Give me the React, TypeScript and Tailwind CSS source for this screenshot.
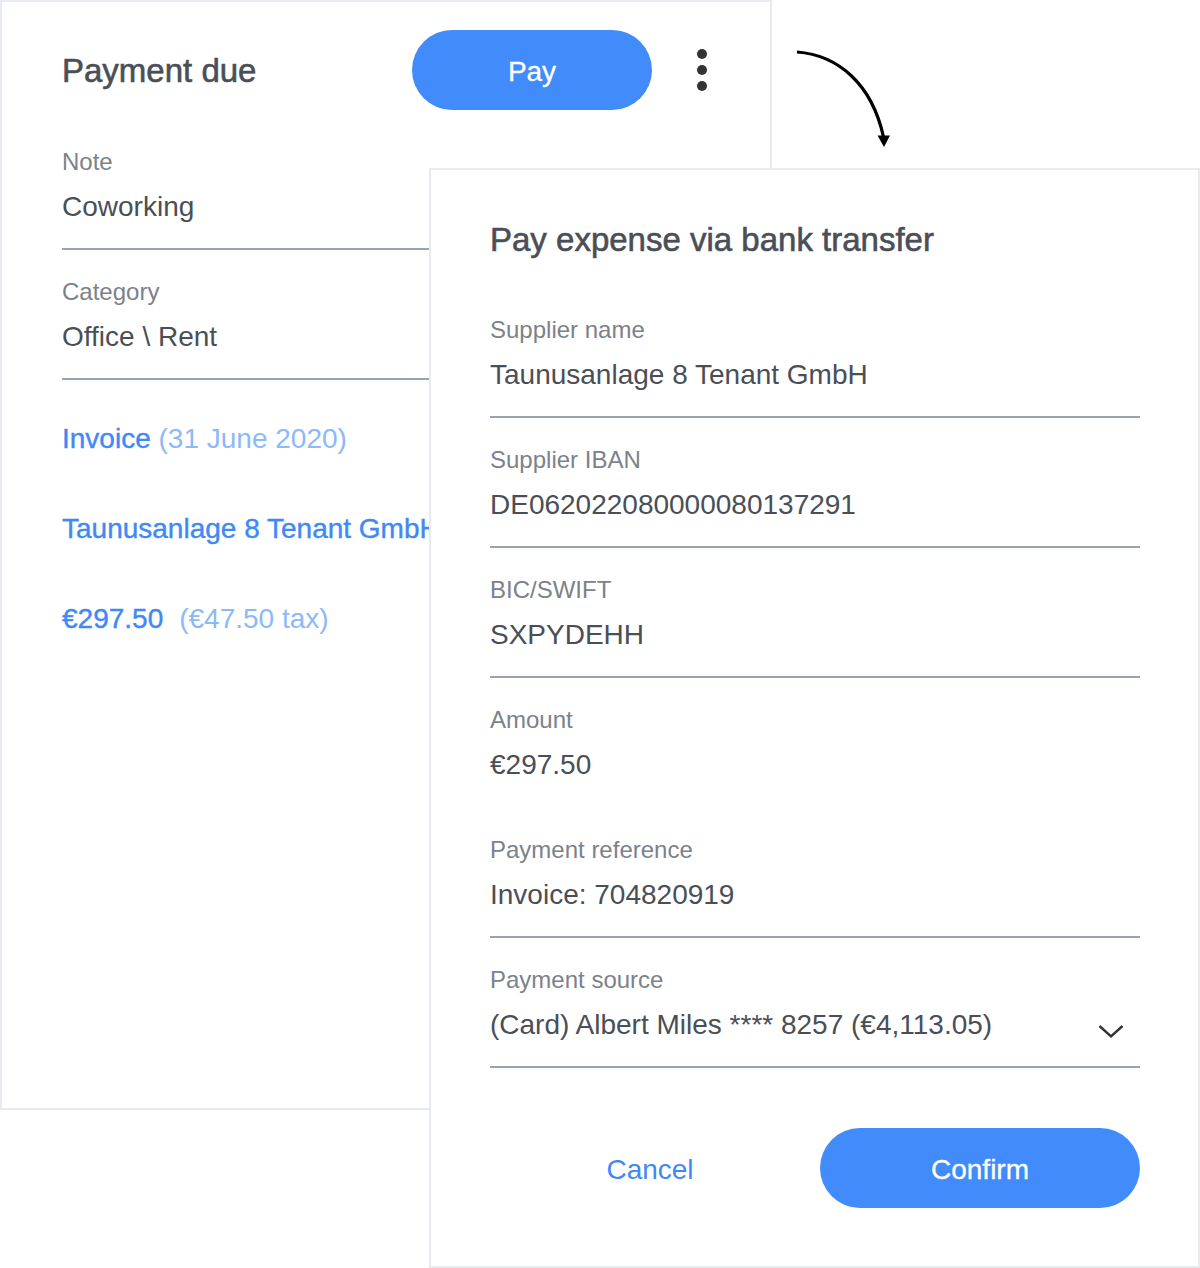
import React from 'react';

interface FieldProps {
  label: string;
  value: React.ReactNode;
  line?: boolean;
  trailing?: React.ReactNode;
}

function Field({ label, value, line = true, trailing }: FieldProps) {
  return (
    <div
      className={`pt-[28px] pb-[24px] border-b-2 ${line ? 'border-[#9ba4ae]' : 'border-transparent'}`}
    >
      <div className="text-[24px] leading-[28px] text-[#7b828a]">{label}</div>
      <div className="mt-[14px] flex items-end justify-between">
        <div className="text-[28px] leading-[34px] text-[#4a4f57] whitespace-nowrap">{value}</div>
        {trailing}
      </div>
    </div>
  );
}

function Chevron() {
  return (
    <svg className="mr-[16px] mb-[3px]" width="26" height="16" viewBox="0 0 26 16" fill="none">
      <path d="M1.5 3 L13 13.5 L24.5 3" stroke="#333" strokeWidth="2.4" />
    </svg>
  );
}

export default function App() {
  return (
    <div className="relative w-[1200px] h-[1268px] bg-white font-['Liberation_Sans',Arial,sans-serif]">
      {/* expense card */}
      <div className="w-[772px] h-[1110px] border-2 border-[#e7ebef] bg-white pl-[60px] pr-[63px] pt-[28px]">
        <div className="flex items-center h-[80px]">
          <h1 className="text-[33px] leading-[36px] pt-[2px] text-[#4a4f57] [-webkit-text-stroke:0.6px_#4a4f57]">
            Payment due
          </h1>
          <button className="ml-auto w-[240px] h-[80px] pt-[3px] rounded-full bg-[#428bfb] text-white text-[28px] [-webkit-text-stroke:0.3px_#ffffff]">
            Pay
          </button>
          <div className="ml-[45px] flex flex-col gap-[6px]">
            <span className="w-[10px] h-[10px] rounded-full bg-[#333]" />
            <span className="w-[10px] h-[10px] rounded-full bg-[#333]" />
            <span className="w-[10px] h-[10px] rounded-full bg-[#333]" />
          </div>
        </div>

        <div className="mt-[10px]">
          <Field label="Note" value="Coworking" />
          <Field label="Category" value="Office \ Rent" />
        </div>

        <div className="mt-[42px] flex flex-col gap-[56px] text-[28px] leading-[34px] whitespace-nowrap">
          <div>
            <span className="text-[#3f89f7] [-webkit-text-stroke:0.4px_#3f89f7]">Invoice</span>{' '}
            <span className="text-[#8cb9f9]">(31 June 2020)</span>
          </div>
          <div className="text-[#3f89f7] [-webkit-text-stroke:0.4px_#3f89f7]">Taunusanlage 8 Tenant GmbH</div>
          <div>
            <span className="text-[#3f89f7] [-webkit-text-stroke:0.4px_#3f89f7]">€297.50</span>
            <span className="ml-[16px] text-[#8cb9f9]">(€47.50 tax)</span>
          </div>
        </div>
      </div>

      {/* arrow */}
      <svg
        className="absolute left-[790px] top-[40px]"
        width="110"
        height="115"
        viewBox="790 40 110 115"
        fill="none"
      >
        <path d="M797 52 C 838 55, 872 84, 883.5 137" stroke="#000" strokeWidth="3.2" />
        <path d="M877.5 135.5 L890 135.5 L884 147 Z" fill="#000" />
      </svg>

      {/* transfer dialog */}
      <div className="absolute left-[429px] top-[168px] w-[771px] h-[1100px] border-2 border-[#e7ebef] bg-white pl-[59px] pr-[58px] pt-[52px]">
        <h2 className="text-[33px] leading-[36px] text-[#4a4f57] [-webkit-text-stroke:0.6px_#4a4f57]">
          Pay expense via bank transfer
        </h2>

        <div className="mt-[30px]">
          <Field label="Supplier name" value="Taunusanlage 8 Tenant GmbH" />
          <Field label="Supplier IBAN" value="DE062022080000080137291" />
          <Field label="BIC/SWIFT" value="SXPYDEHH" />
          <Field label="Amount" value="€297.50" line={false} />
          <Field label="Payment reference" value="Invoice: 704820919" />
          <Field
            label="Payment source"
            value="(Card) Albert Miles **** 8257 (€4,113.05)"
            trailing={<Chevron />}
          />
        </div>

        <div className="mt-[60px] flex justify-between">
          <button className="w-[320px] h-[80px] pt-[4px] text-[28px] text-[#3f89f7]">Cancel</button>
          <button className="w-[320px] h-[80px] pt-[4px] rounded-full bg-[#428bfb] text-white text-[28px] [-webkit-text-stroke:0.3px_#ffffff]">
            Confirm
          </button>
        </div>
      </div>
    </div>
  );
}
